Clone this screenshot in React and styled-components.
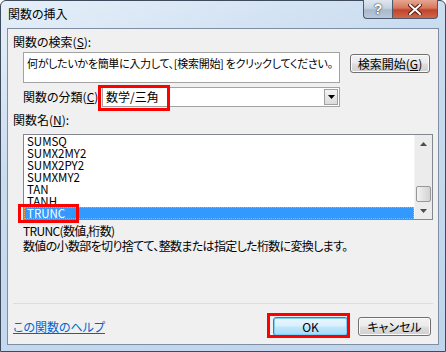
import React from "react";
import styled, { createGlobalStyle } from "styled-components";

const FONT = `"Noto Sans CJK JP", "Liberation Sans", sans-serif`;

const GlobalStyle = createGlobalStyle`
  html, body {
    margin: 0;
    padding: 0;
    background: #ffffff;
  }
  * {
    box-sizing: border-box;
  }
  body {
    font-family: ${FONT};
    font-size: 12px;
    font-feature-settings: "palt";
    color: #000;
  }
`;

const functions = ["SUMSQ", "SUMX2MY2", "SUMX2PY2", "SUMXMY2", "TAN", "TANH", "TRUNC"];

function App() {
  return (
    <>
      <GlobalStyle />
      <Window>
        <TitleBar>
          <Title>関数の挿入</Title>
          <CaptionButtons>
            <HelpCaption>?</HelpCaption>
            <CloseCaption>
              <svg width="14" height="11" viewBox="0 0 14 11">
                <path
                  d="M2 1 L12 10 M12 1 L2 10"
                  stroke="#5a1a10"
                  strokeWidth="4"
                  strokeLinecap="square"
                />
                <path
                  d="M2 1 L12 10 M12 1 L2 10"
                  stroke="#ffffff"
                  strokeWidth="2"
                  strokeLinecap="square"
                />
              </svg>
            </CloseCaption>
          </CaptionButtons>
        </TitleBar>

        <Client>
          <SectionLabel>
            関数の検索(<u>S</u>):
          </SectionLabel>
          <SearchRow>
            <HintBox>何がしたいかを簡単に入力して、[検索開始] をクリックしてください。</HintBox>
            <PushButton $width={80} $top={2}>
              検索開始(<u>G</u>)
            </PushButton>
          </SearchRow>

          <CategoryRow>
            <CategoryLabel>
              関数の分類(<u>C</u>)
            </CategoryLabel>
            <Select>
              <SelectValue>数学/三角</SelectValue>
              <DropButton>
                <svg width="7" height="4" viewBox="0 0 7 4">
                  <path d="M0 0 H7 L3.5 4 Z" fill="#000" />
                </svg>
              </DropButton>
              <RedMark $left={-5} $top={-3} $width={72} $height={26} />
            </Select>
          </CategoryRow>

          <SectionLabel $top={6}>
            関数名(<u>N</u>):
          </SectionLabel>
          <ListBox>
            <Rows>
              {functions.map((name) => (
                <Row key={name} $selected={name === "TRUNC"}>
                  {name}
                </Row>
              ))}
            </Rows>
            <ScrollBar>
              <ArrowCell>
                <svg width="7" height="4" viewBox="0 0 7 4">
                  <path d="M0 4 H7 L3.5 0 Z" fill="#4d4d4d" />
                </svg>
              </ArrowCell>
              <Track>
                <Thumb />
              </Track>
              <ArrowCell>
                <svg width="7" height="4" viewBox="0 0 7 4">
                  <path d="M0 0 H7 L3.5 4 Z" fill="#4d4d4d" />
                </svg>
              </ArrowCell>
            </ScrollBar>
            <RedMark $left={-6} $top={69} $width={61} $height={19} />
          </ListBox>

          <Description>
            <div>TRUNC(数値,桁数)</div>
            <div>数値の小数部を切り捨てて、整数または指定した桁数に変換します。</div>
          </Description>

          <Spacer />
          <Separator />

          <Footer>
            <HelpLink href="#">この関数のヘルプ</HelpLink>
            <Buttons>
              <OkWrap>
                <PushButton $width={75} $primary>
                  OK
                </PushButton>
                <RedMark $left={-6} $top={-4} $width={83} $height={25} />
              </OkWrap>
              <PushButton $width={73}>キャンセル</PushButton>
            </Buttons>
          </Footer>
        </Client>
      </Window>
    </>
  );
}

const Window = styled.div`
  width: 446px;
  height: 352px;
  display: flex;
  flex-direction: column;
  padding: 0 6px 6px;
  border: 1px solid #3d4b5c;
  border-radius: 6px 6px 0 0;
  background: linear-gradient(160deg, #e6eff9 0%, #c9dcf0 35%, #bfd5ec 100%);
`;

const TitleBar = styled.div`
  height: 27px;
  display: flex;
  justify-content: space-between;
  align-items: flex-start;
  margin: 0 -6px;
  padding: 0 7px 0 7px;
`;

const Title = styled.div`
  margin-top: 5px;
  font-size: 12px;
  line-height: 16px;
  color: #000;
`;

const CaptionButtons = styled.div`
  display: flex;
  height: 19px;
  margin-top: -1px;
`;

const CaptionBase = styled.div`
  height: 19px;
  display: flex;
  align-items: center;
  justify-content: center;
  border: 1px solid #4b5a6c;
  border-top: none;
`;

const HelpCaption = styled(CaptionBase)`
  width: 29px;
  border-right: none;
  border-radius: 0 0 0 4px;
  background: linear-gradient(to bottom, #dfe7f0 0%, #c6d3e2 45%, #a9b9cc 55%, #b9c8da 100%);
  color: #fff;
  font-family: "Liberation Sans", sans-serif;
  font-weight: bold;
  font-size: 14px;
  text-shadow: 0 0 2px #2c3a4c, 0 0 1px #2c3a4c;
`;

const CloseCaption = styled(CaptionBase)`
  width: 46px;
  border-radius: 0 0 4px 0;
  background: linear-gradient(to bottom, #e6a792 0%, #d6765a 45%, #c1442a 55%, #d0664c 100%);
`;

const Client = styled.div`
  flex: 1;
  display: flex;
  flex-direction: column;
  padding: 0 5px;
  background: #f0f0f0;
  border: 1px solid #7f8ea2;
`;

const SectionLabel = styled.div`
  margin-top: ${(p) => p.$top ?? 6}px;
  height: 14px;
  line-height: 14px;
  white-space: nowrap;
`;

const SearchRow = styled.div`
  display: flex;
  align-items: flex-start;
  margin-top: 3px;
  padding-left: 10px;
`;

const HintBox = styled.div`
  width: 317px;
  height: 31px;
  padding: 3px 3px;
  line-height: 14px;
  font-size: 11px;
  letter-spacing: -0.3px;
  background: #fff;
  border: 1px solid #a3a3a3;
  white-space: nowrap;
`;

const PushButton = styled.div`
  width: ${(p) => p.$width}px;
  height: 19px;
  margin-top: ${(p) => p.$top ?? 0}px;
  margin-left: ${(p) => (p.$top ? 10 : 0)}px;
  display: flex;
  align-items: center;
  justify-content: center;
  border: 1px solid ${(p) => (p.$primary ? "#3c7fb1" : "#707070")};
  border-radius: 3px;
  box-shadow: inset 0 0 0 1px ${(p) => (p.$primary ? "#7fd0f6" : "#fbfbfb")};
  background: ${(p) =>
    p.$primary
      ? "linear-gradient(to bottom, #eaf6fd 0%, #d9f0fc 45%, #bee6fd 55%, #a7d9f5 100%)"
      : "linear-gradient(to bottom, #f2f2f2 0%, #ebebeb 45%, #dddddd 55%, #cfcfcf 100%)"};
  line-height: 14px;
  white-space: nowrap;
`;

const CategoryRow = styled.div`
  display: flex;
  align-items: center;
  margin-top: 4px;
  padding-left: 10px;
`;

const CategoryLabel = styled.div`
  width: 79px;
  line-height: 20px;
  white-space: nowrap;
`;

const Select = styled.div`
  position: relative;
  width: 238px;
  height: 20px;
  display: flex;
  align-items: center;
  justify-content: space-between;
  background: #fff;
  border: 1px solid #a3a3a3;
`;

const SelectValue = styled.div`
  padding-left: 3px;
  line-height: 14px;
`;

const DropButton = styled.div`
  width: 14px;
  height: 16px;
  margin-right: 1px;
  display: flex;
  align-items: center;
  justify-content: center;
  border: 1px solid #a0a0a0;
  background: linear-gradient(to bottom, #f4f4f4, #dcdcdc);
`;

const RedMark = styled.div`
  position: absolute;
  left: ${(p) => p.$left}px;
  top: ${(p) => p.$top}px;
  width: ${(p) => p.$width}px;
  height: ${(p) => p.$height}px;
  border: 3px solid #ff0000;
  pointer-events: none;
`;

const ListBox = styled.div`
  position: relative;
  margin: 7px 0 0 10px;
  width: 410px;
  height: 86px;
  display: flex;
  background: #fff;
  border: 1px solid #828790;
`;

const Rows = styled.div`
  flex: 1;
  display: flex;
  flex-direction: column;
`;

const Row = styled.div`
  height: 12px;
  font-size: 11.5px;
  padding-left: ${(p) => (p.$selected ? 2 : 3)}px;
  background: ${(p) => (p.$selected ? "#3399ff" : "transparent")};
  color: ${(p) => (p.$selected ? "#fff" : "#000")};
  border: ${(p) => (p.$selected ? "1px dotted #f5a04a" : "none")};
  line-height: ${(p) => (p.$selected ? 10 : 12)}px;
`;

const ScrollBar = styled.div`
  width: 18px;
  display: flex;
  flex-direction: column;
  background: #ececec;
  border-left: 1px solid #f4f4f4;
`;

const ArrowCell = styled.div`
  height: 17px;
  display: flex;
  align-items: center;
  justify-content: center;
`;

const Track = styled.div`
  flex: 1;
  display: flex;
  flex-direction: column;
  justify-content: flex-end;
`;

const Thumb = styled.div`
  height: 16px;
  margin: 0 1px;
  border: 1px solid #979797;
  border-radius: 2px;
  background: linear-gradient(to right, #f3f3f3, #e2e2e2 50%, #d3d3d3);
`;

const Description = styled.div`
  margin: 3px 0 0 10px;
  line-height: 15px;
  letter-spacing: -0.65px;
  white-space: nowrap;
`;

const Spacer = styled.div`
  flex: 1;
`;

const Separator = styled.div`
  height: 1px;
  background: #d5dfe5;
`;

const Footer = styled.div`
  display: flex;
  justify-content: space-between;
  align-items: center;
  height: 19px;
  margin: 13px 0 8px;
`;

const HelpLink = styled.a`
  color: #0066cc;
  text-decoration: underline;
  line-height: 14px;
`;

const Buttons = styled.div`
  display: flex;
  gap: 10px;
  margin-right: 2px;
`;

const OkWrap = styled.div`
  position: relative;
`;

export default App;
